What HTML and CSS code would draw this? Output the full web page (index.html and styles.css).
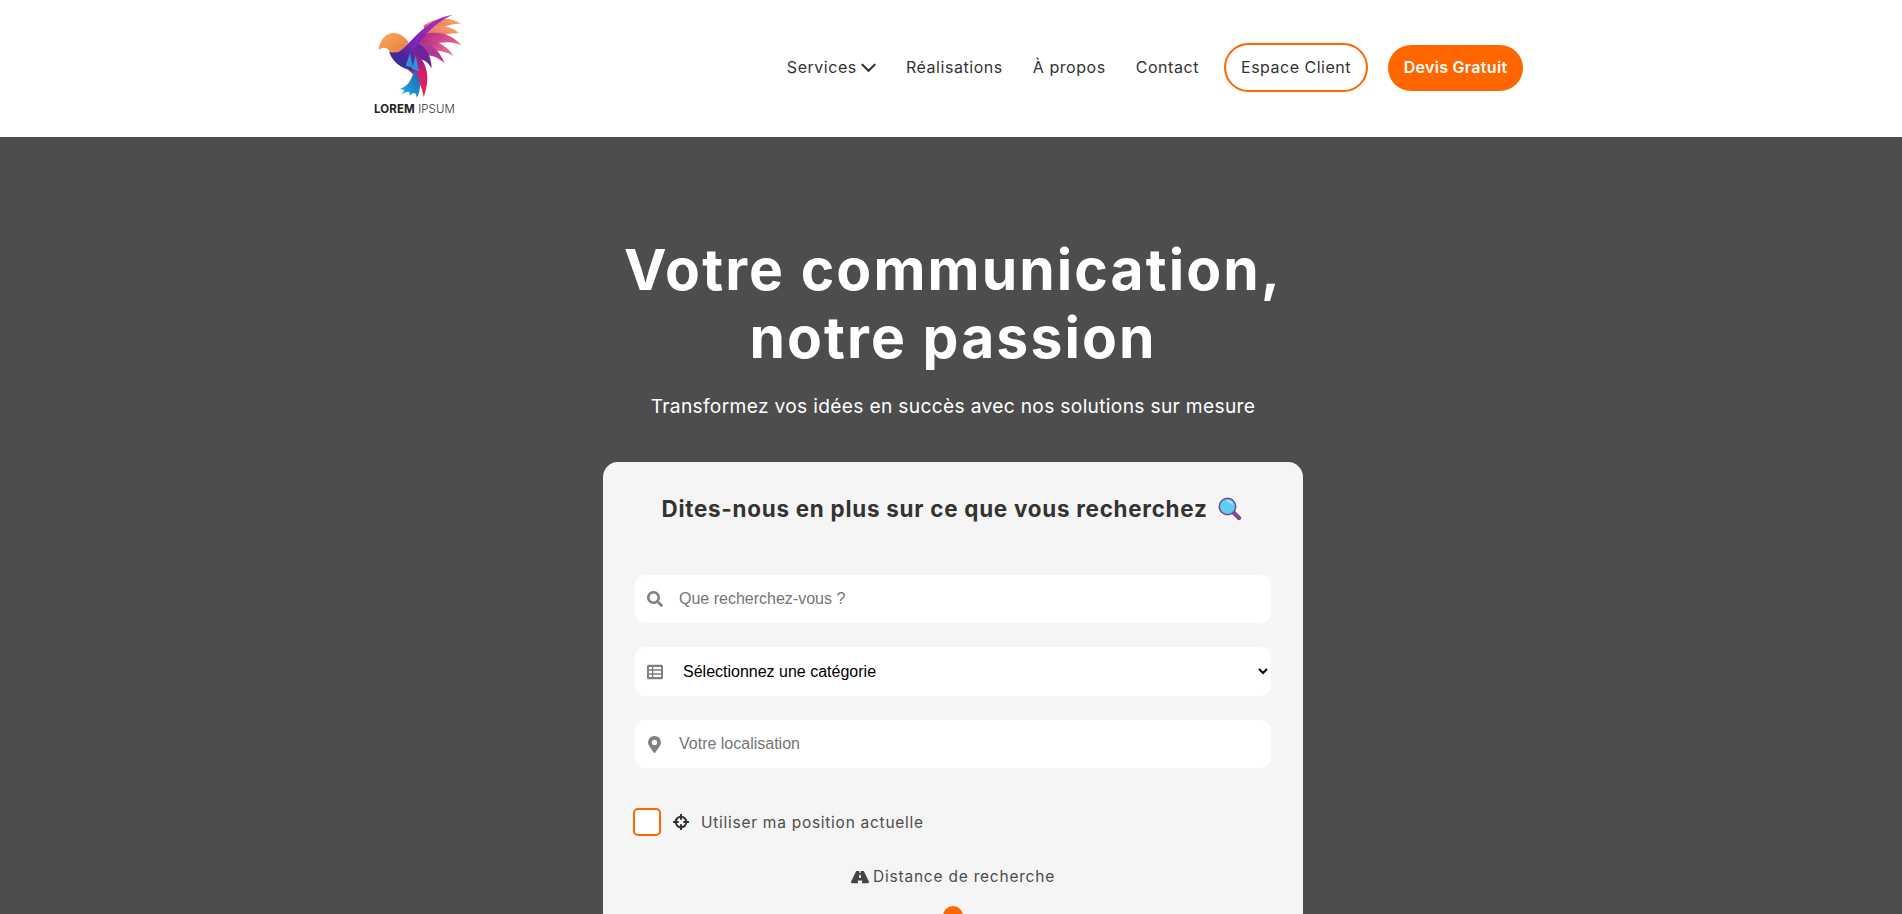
FILE: index.html
```html
<!DOCTYPE html>
<html lang="fr">
<head>
<meta charset="utf-8">
<title>Lorem Ipsum</title>
<link rel="stylesheet" href="styles.css">
</head>
<body>
<header class="site-header">
  <div class="header-inner">
    <a class="logo" href="#">
      <svg class="logo-bird" viewBox="50 35 260 260" aria-hidden="true">
        <defs>
          <linearGradient id="gHead" x1="0" y1="0" x2="1" y2="1"><stop offset="0" stop-color="#f8ad5c"/><stop offset="1" stop-color="#e9783f"/></linearGradient>
          <linearGradient id="gBody" x1="1" y1="0" x2="0" y2="1"><stop offset="0" stop-color="#a62cc4"/><stop offset=".5" stop-color="#50249f"/><stop offset="1" stop-color="#1c3c8c"/></linearGradient>
          <linearGradient id="gWing" x1="1" y1="0" x2="0" y2="1"><stop offset="0" stop-color="#bb2dc9"/><stop offset="1" stop-color="#4f22a4"/></linearGradient>
          <linearGradient id="gFeatherO" x1="1" y1="0" x2="0" y2="1"><stop offset="0" stop-color="#f8b552"/><stop offset="1" stop-color="#e0408a"/></linearGradient>
          <linearGradient id="gFeatherP" x1="1" y1="0.500" x2="0" y2="0"><stop offset="0" stop-color="#e86a96"/><stop offset="1" stop-color="#b01e7a"/></linearGradient>
          <linearGradient id="gTail" x1="0" y1="0" x2="0" y2="1"><stop offset="0" stop-color="#6d209c"/><stop offset=".5" stop-color="#d61d68"/><stop offset="1" stop-color="#e8205a"/></linearGradient>
          <linearGradient id="gBlue" x1="1" y1="0" x2="0" y2="1"><stop offset="0" stop-color="#1a5eb4"/><stop offset="1" stop-color="#27b9e4"/></linearGradient>
        </defs>
        <path fill="url(#gFeatherO)" d="M190 75C230 48 275 50 302 71C270 68 240 82 195 118Z"/>
        <path fill="url(#gFeatherO)" d="M185 90C230 70 272 74 297 100C265 95 230 110 185 135Z"/>
        <path fill="url(#gFeatherP)" d="M172 105C225 88 275 98 303 135C265 118 225 126 175 150Z"/>
        <path fill="url(#gFeatherP)" d="M170 120C215 112 258 132 279 166C245 146 215 148 175 160Z"/>
        <path fill="#ad3a92" d="M168 125C205 122 240 150 252 188C228 166 205 162 170 165Z"/>
        <path fill="#6c2498" d="M160 125C195 132 213 165 214 204C200 180 185 175 160 175Z"/>
        <path fill="url(#gHead)" d="M55 149C56 126 72 99 98 98C118 97 132 110 145 125C130 150 112 160 92 160C84 140 70 138 55 149Z"/>
        <path fill="url(#gWing)" d="M100 165C155 135 185 58 277 43C235 62 205 88 178 125C165 148 145 165 120 178Z"/>
        <path fill="url(#gTail)" d="M145 150C190 165 218 215 190 291C186 258 170 232 145 210Z"/>
        <path fill="url(#gBody)" d="M86 154C115 165 155 140 180 108C160 140 156 175 172 214C135 208 100 195 86 154Z"/>
        <path fill="#2b93d4" d="M136 196L149 158L158 203ZM154 206L166 165L176 214Z"/>
        <path fill="url(#gBlue)" d="M162 210C180 235 186 265 169 293C168 279 163 270 147 287C151 273 145 269 121 284C132 273 137 268 118 266C145 258 155 235 162 210Z"/>
      </svg>
      <span class="logo-text"><b>LOREM</b> IPSUM</span>
    </a>
    <nav class="main-nav">
      <a class="nav-link" href="#">Services
        <svg class="chevron" viewBox="0 0 16 10" aria-hidden="true"><path d="M1.500 1.500 8 8l6.500-6.500" fill="none" stroke="currentColor" stroke-width="2.200" stroke-linecap="round"/></svg>
      </a>
      <a class="nav-link" href="#">Réalisations</a>
      <a class="nav-link" href="#">À propos</a>
      <a class="nav-link" href="#">Contact</a>
      <a class="btn btn-outline" href="#">Espace Client</a>
      <a class="btn btn-solid" href="#">Devis Gratuit</a>
    </nav>
  </div>
</header>

<main class="hero">
  <h1 class="hero-title">Votre communication,<br>notre passion</h1>
  <p class="hero-sub">Transformez vos idées en succès avec nos solutions sur mesure</p>

  <form class="search-card">
    <h2 class="card-title">Dites-nous en plus sur ce que vous recherchez
      <svg class="emoji" viewBox="0 0 24 24" aria-hidden="true">
        <path d="M14.500 14.500 21 21" stroke="#7d4a93" stroke-width="4.400" stroke-linecap="round"/>
        <circle cx="9.500" cy="9.500" r="8.200" fill="#5fcdf0" stroke="#6f4a95" stroke-width="1.500"/>
        <path d="M9 4.200a5 5 0 0 1 5.500 3.500" fill="none" stroke="#a9e6f8" stroke-width="1.600"/>
      </svg>
    </h2>

    <div class="field">
      <svg class="field-icon" viewBox="0 0 512 512" aria-hidden="true"><path d="M505 442.700 405.300 343c-4.500-4.500-10.600-7-17-7H372c27.600-35.300 44-79.700 44-128C416 93.100 322.900 0 208 0S0 93.100 0 208s93.100 208 208 208c48.300 0 92.700-16.400 128-44v16.300c0 6.400 2.500 12.500 7 17l99.700 99.700c9.400 9.400 24.600 9.400 33.900 0l28.300-28.300c9.400-9.400 9.400-24.600.1-34zM208 336c-70.700 0-128-57.200-128-128 0-70.700 57.200-128 128-128 70.700 0 128 57.200 128 128 0 70.700-57.200 128-128 128z"/></svg>
      <input class="field-input" type="text" placeholder="Que recherchez-vous ?">
    </div>

    <div class="field field-select">
      <svg class="field-icon" viewBox="0 0 512 512" aria-hidden="true"><path fill-rule="evenodd" d="M48 24h416a48 48 0 0 1 48 48v368a48 48 0 0 1-48 48H48a48 48 0 0 1-48-48V72a48 48 0 0 1 48-48zm16 70v72h92V94H64zm140 0v72h244V94H204zM64 214v84h92v-84H64zm140 0v84h244v-84H204zM64 346v72h92v-72H64zm140 0v72h244v-72H204z"/></svg>
      <select class="field-input select-input">
        <option>Sélectionnez une catégorie</option>
      </select>
    </div>

    <div class="field">
      <svg class="field-icon pin" viewBox="0 0 384 512" aria-hidden="true"><path fill-rule="evenodd" d="M172.300 501.700C27 291 0 269.400 0 192 0 86 86 0 192 0s192 86 192 192c0 77.400-27 99-172.300 309.700-9.500 13.800-29.900 13.800-39.400 0zM192 272a80 80 0 1 0 0-160 80 80 0 0 0 0 160z"/></svg>
      <input class="field-input" type="text" placeholder="Votre localisation">
    </div>

    <label class="geo-row">
      <input class="geo-check" type="checkbox">
      <svg class="geo-icon" viewBox="0 0 24 24" aria-hidden="true">
        <circle cx="12" cy="12" r="8" fill="none" stroke="currentColor" stroke-width="3"/>
        <path d="M12 1v6.500M12 16.500V23M1 12h6.500M16.500 12H23" stroke="currentColor" stroke-width="3" stroke-linecap="round"/>
      </svg>
      <span>Utiliser ma position actuelle</span>
    </label>

    <div class="distance">
      <p class="distance-label">
        <svg class="road" viewBox="0 0 576 512" preserveAspectRatio="none" aria-hidden="true"><path fill-rule="evenodd" d="M573 421 414 48c-4-10-13-16-24-16H312l3 60c0 5-3 9-8 9h-38c-5 0-8-4-8-9l3-60H186c-11 0-20 6-24 16L3 421c-11 26 8 59 36 59h186l-7-80c0-6 4-12 10-12h120c6 0 10 6 10 12l-7 80h186c28 0 47-33 36-59zM317 284c.4 5-3 9-8 9h-42c-5 0-8-4-8-9l5-100c0-4 4-8 8-8h32c4 0 8 4 8 8z"/></svg>
        Distance de recherche
      </p>
      <div class="slider"><span class="slider-thumb"></span></div>
    </div>
  </form>
</main>
</body>
</html>
```

FILE: styles.css
```css
* { box-sizing: border-box; }
html, body { margin: 0; height: 100%; overflow: hidden; }
body { font-family: Inter, "Open Sans", sans-serif; background: #4d4d4d; color: #333; }
a { text-decoration: none; color: inherit; }

.site-header { background: #fff; height: 137px; }
.header-inner {
  width: 1170px; height: 100%; margin: 0 auto;
  padding: 0 13px 0 8px;
  display: flex; align-items: flex-start; justify-content: space-between;
}
.logo { display: flex; flex-direction: column; padding-top: 12px; width: 90px; }
.logo-bird { width: 86.7px; height: 86.7px; margin-left: 3px; }
.logo-text { font-size: 11.5px; line-height: 13px; margin-top: 4px; color: #333; font-weight: 300; white-space: nowrap; letter-spacing: .1px; }
.logo-text b { font-weight: 700; color: #222; }

.main-nav { display: flex; align-items: center; height: 135px; }
.nav-link { font-size: 16px; color: #333; display: flex; align-items: center; margin-right: 30px; letter-spacing: .55px; padding-bottom: 2px; }
.chevron { width: 15px; height: 10px; margin-left: 4px; margin-top: 2px; }
.btn { display: flex; align-items: center; border-radius: 25px; font-size: 16px; white-space: nowrap; padding-bottom: 2px; }
.btn-outline { height: 49px; width: 144px; justify-content: center; border: 2px solid #ff6600; margin-left: -5px; margin-right: 20px; letter-spacing: .5px; }
.btn-solid { height: 46px; width: 135px; justify-content: center; background: #ff6600; color: #fff; font-weight: 600; letter-spacing: .3px; }

.hero { display: flex; flex-direction: column; align-items: center; padding: 99px 0 0 4px; height: 777px; }
.hero-title { margin: 0; font-size: 57px; line-height: 67.5px; font-weight: 700; color: #fff; text-align: center; letter-spacing: 2.1px; }
.hero-sub { margin: 21px 0 0; font-size: 19.2px; line-height: 28px; color: #fff; font-weight: 400; letter-spacing: .32px; }

.search-card {
  width: 700px; margin-top: 42px; padding: 30px 32px 40px;
  background: #f5f5f5; border-radius: 15px; flex: none;
}
.card-title { margin: 0 0 50px; padding-right: 3px; font-size: 22.4px; line-height: 33px; font-weight: 700; color: #333; text-align: center; display: flex; justify-content: center; align-items: center; gap: 10px; letter-spacing: .75px; }
.emoji { width: 24px; height: 24px; flex: none; }

.field { position: relative; height: 48px; margin-bottom: 24px; background: #fff; border-radius: 10px; display: flex; align-items: center; padding-left: 12px; }
.field-select { height: 49px; margin-bottom: 24px; }
.field-icon { width: 16px; height: 16px; fill: #808080; flex: none; }
.field-icon.pin { width: 13px; height: 17px; margin-left: 1px; margin-right: 2px; }
.field-input { flex: 1; min-width: 0; height: 100%; border: 0; background: transparent; outline: none; font-family: "Liberation Sans", Arial, sans-serif; font-size: 16px; padding: 0 0 0 16px; color: #000; }
.field-input::placeholder { color: #757575; }
.select-input { padding-left: 16px; }

.geo-row { display: flex; align-items: center; margin: 40px 0 0 -2px; font-size: 15.5px; color: #4d4d4d; letter-spacing: .73px; }
.geo-check { appearance: none; width: 28px; height: 28px; margin: 0 12px 0 0; background: #fff; border: 2px solid #ff6600; border-radius: 5px; flex: none; }
.geo-icon { width: 16px; height: 16px; margin-right: 12px; color: #333; flex: none; }

.distance { margin-top: 29px; text-align: center; }
.distance-label { margin: 0; font-size: 15.5px; line-height: 24px; color: #4d4d4d; letter-spacing: .78px; display: flex; justify-content: center; align-items: center; gap: 4px; }
.road { width: 18px; height: 14px; fill: #444; }
.slider { display: flex; justify-content: center; margin-top: 17px; height: 20px; }
.slider-thumb { width: 20px; height: 20px; border-radius: 50%; background: #ff6600; }
```
